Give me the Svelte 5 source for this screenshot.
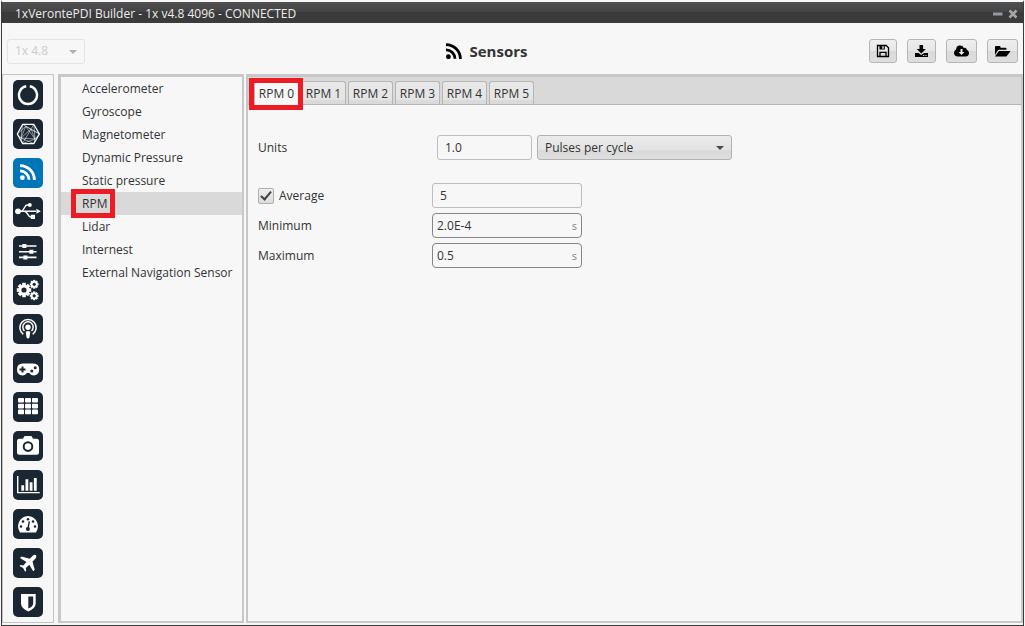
<script lang="ts">
  let version = $state('1x 4.8');
  let sensor = $state('RPM');
  let tab = $state(0);
  let units = $state('1.0');
  let unitType = $state('Pulses per cycle');
  let average = $state(true);
  let samples = $state('5');
  let minimum = $state('2.0E-4');
  let maximum = $state('0.5');
  let section = $state('sensors');

  const sensors = [
    'Accelerometer',
    'Gyroscope',
    'Magnetometer',
    'Dynamic Pressure',
    'Static pressure',
    'RPM',
    'Lidar',
    'Internest',
    'External Navigation Sensor'
  ];
  const tabs = [0, 1, 2, 3, 4, 5];
  const sections = [
    'veronte', 'connections', 'sensors', 'usb', 'control', 'automations', 'communications',
    'stick', 'variables', 'camera', 'telemetry', 'panel', 'aircraft', 'safety'
  ];
  const cogTeeth = [0, 45, 90, 135];
</script>

{#snippet cog(x: number, y: number, r: number)}
  <g transform="translate({x} {y})">
    {#each cogTeeth as angle}
      <rect x={-r * 0.25} y={-r} width={r * 0.5} height={r * 2} transform="rotate({angle})" />
    {/each}
    <circle r={r * 0.77} />
    <circle r={r * 0.36} class="hole" />
  </g>
{/snippet}

{#snippet rss()}
  <circle cx="9.4" cy="19.7" r="2.4" />
  <path d="M7 12.8a9 9 0 0 1 9 9M7 7.6a14.4 14.4 0 0 1 14.4 14.4" class="line" stroke-width="2.8" />
{/snippet}

{#snippet sectionIcon(name: string)}
  <svg viewBox="0 0 30 30" aria-hidden="true">
    {#if name === 'veronte'}
      <path d="M16.8 6.2a9 9 0 1 1-3.6 0" class="line" stroke-width="2.4" />
    {:else if name === 'connections'}
      <path d="M4.3 15 9.6 5.4h11.2L26.4 15l-5.6 9.6H9.6z" class="line" stroke-width="1.2" />
      <path d="M9.6 5.4 18 10l2.8-4.6M4.3 15l8.4-7.6L26.4 15M9.6 5.4 8 19l1.6 5.6M4.3 15 8 19l10-9 4 10-1.2 4.6M26.4 15 22 20 8 19l12.8 5.6M9.6 24.6l8.4-14.6L26.4 15M12.7 7.4 22 20l-12.4 4.6M20.8 5.4 22 20M12.7 7.4 8 19" class="line" stroke-width="0.5" />
    {:else if name === 'sensors'}
      {@render rss()}
    {:else if name === 'usb'}
      <circle cx="5" cy="14.3" r="2.9" />
      <circle cx="16.8" cy="8.1" r="2" />
      <path d="M5 14.3h18M8 14.3c3 0 3.5-6.2 6-6.2h3M11.5 14.3c3 0 3.5 5.7 6 5.7h2" class="line" stroke-width="1.5" />
      <path d="m23.4 11.8 4.4 2.5-4.4 2.5zM17.8 17.8H22V22h-4.2z" />
    {:else if name === 'control'}
      <path d="M6 10h17.5M6 15.7h17.5M6 21.4h17.5" class="line" stroke-width="1.6" />
      <path d="M9.4 8h4v4h-4zM16.4 13.7h4v4h-4zM10.4 19.4h4v4h-4z" />
    {:else if name === 'automations'}
      {@render cog(11, 15, 7.2)}
      {@render cog(21.2, 9.3, 4.4)}
      {@render cog(21.2, 20.8, 4.4)}
    {:else if name === 'communications'}
      <path d="M10.3 20.3a8.2 8.2 0 1 1 9.4 0M11.5 16.9a5.2 5.2 0 1 1 7 0" class="line" stroke-width="1.5" />
      <circle cx="15" cy="13.2" r="2.7" />
      <path d="M12.7 17.8q2.3-1.4 4.6 0l-.9 6q-1.4 1.3-2.8 0z" />
    {:else if name === 'stick'}
      <path d="M9.8 10.6q-5.8.2-5.8 6T9.8 22.4q2.7 0 4-2.4h2.6q1.3 2.4 4 2.4 5.8 0 5.8-5.8t-5.8-6z" />
      <path d="M6.5 16.5h6M9.5 13.5v6" class="dark" stroke-width="2" />
      <circle cx="18.8" cy="18" r="1.5" class="hole" />
      <circle cx="22.2" cy="14.7" r="1.5" class="hole" />
    {:else if name === 'variables'}
      {#each [6, 11.8, 17.6] as y}
        {#each [5, 12, 19] as x}
          <rect {x} {y} width="6" height="4.6" rx="0.8" />
        {/each}
      {/each}
    {:else if name === 'camera'}
      <path d="M6.5 7.8H10l1-2q.3-.8 1.2-.8h5.6q.9 0 1.2.8l1 2h3.5Q26 7.8 26 10.3v11q0 2.5-2.5 2.5h-17Q4 23.8 4 21.3v-11q0-2.5 2.5-2.5z" />
      <circle cx="15" cy="15.6" r="4.3" class="dark" stroke-width="2" />
    {:else if name === 'telemetry'}
      <path d="M4.7 6v16.6h22" class="line" stroke-width="1.4" />
      <path d="M8.3 15.2h2.8v5.6H8.3zM12.5 9.3h2.8v11.5h-2.8zM16.7 12.2h2.8v8.6h-2.8zM20.9 8h2.8v12.8h-2.8z" />
    {:else if name === 'panel'}
      <path d="M7 23.5q-2-2.9-2-6.4a10 10 0 0 1 20 0q0 3.5-2 6.4z" />
      <path d="m16.3 12.5-1.3 7" class="dark" stroke-width="1.4" />
      <circle cx="14.9" cy="20" r="2" class="hole" />
      {#each [[8, 17.5], [10, 12.5], [15, 10.3], [20, 12.5], [22, 17.5]] as [cx, cy]}
        <circle {cx} {cy} r="1.3" class="hole" />
      {/each}
    {:else if name === 'aircraft'}
      <path d="M23 7.2q-1.5-1-3.2.5l-3.1 3L8.5 8.5 7 10l6.5 3.9-3.2 3.5-2.8-.4-1 1 3.6 2.1 2.1 3.6 1-1-.4-2.8 3.5-3.2 3.9 6.5 1.5-1.5-2.2-8.2 3-3.1q1.5-1.7.5-3.2z" />
    {:else}
      <path d="M8 7h14.7v9.4q0 4.5-7.4 8Q8 20.9 8 16.4z" />
      <path d="M15.3 9.5h4.9v6.9q0 2.7-4.9 5.2z" class="hole" />
    {/if}
  </svg>
{/snippet}

<div class="window">
  <div class="titlebar">
    <span>1xVerontePDI Builder - 1x v4.8 4096 - CONNECTED</span>
    <div class="window-buttons">
      <button aria-label="Minimize">
        <svg width="10" height="10" viewBox="0 0 10 10"><path d="M0 5h9.5" stroke="#909aa0" stroke-width="3" /></svg>
      </button>
      <button aria-label="Close">
        <svg width="10" height="10" viewBox="0 0 10 10"><path d="m1.5 1.5 7 7m0-7-7 7" stroke="#a8a8a8" stroke-width="2.5" /></svg>
      </button>
    </div>
  </div>

  <header>
    <div class="select version">
      <select bind:value={version} aria-label="Version" disabled>
        <option>1x 4.8</option>
      </select>
      <svg width="8" height="4" viewBox="0 0 8 4"><path d="M0 0h8L4 4z" /></svg>
    </div>
    <h1>
      <svg width="16" height="16" viewBox="7 6 16 16" aria-hidden="true">{@render rss()}</svg>
      Sensors
    </h1>
    <div class="toolbar">
      <button aria-label="Save">
        <svg width="14" height="14" viewBox="0 0 14 14">
          <path d="M1.5 1.5h8.7l2.3 2.3v8.7h-11zM4 12.5V8.3h6v4.2" fill="none" stroke="#000" stroke-width="1.3" />
          <path d="M3.5 1.5h5.3v4H3.5z" /><path d="M6.3 2.3h1.4v2.4H6.3z" fill="#eee" />
        </svg>
      </button>
      <button aria-label="Download">
        <svg width="15" height="14" viewBox="0 0 15 14">
          <path d="M5.5 1h3.6v3.9h2.8L7.3 9.4 2.7 4.9h2.8z" />
          <path d="M1 9h3.5l2.8 2.1L10.1 9H14v4H1z" /><path d="M9 11.5h1.2m1.2 0h1.2" stroke="#ddd" />
        </svg>
      </button>
      <button aria-label="Download from cloud">
        <svg width="17" height="14" viewBox="0 0 17 14">
          <path d="M5 12.5q-4 0-4-3.7 0-2.3 2.1-3.3Q3.2 1.5 7 1.5q2.8 0 3.9 2.4 2.5-.7 2.9 1.9 2.2.9 2.2 3.3 0 3.4-3.5 3.4z" />
          <path d="M7.5 5h2v3h2l-3 3-3-3h2z" fill="#e8e8e8" />
        </svg>
      </button>
      <button aria-label="Open">
        <svg width="17" height="14" viewBox="0 0 17 14">
          <path d="M1 11V3q0-1 1-1h3.5q1 0 1 1v.8h5q1 0 1 1v1H5.2q-.9 0-1.5.8z" />
          <path d="M4.9 7h11q.7 0 .2.700l-3.3 4.300q-.4.500-1 .500H1z" />
        </svg>
      </button>
    </div>
  </header>

  <main>
    <nav class="sections">
      {#each sections as name}
        <button class:active={section === name} aria-label={name} onclick={() => (section = name)}>
          {@render sectionIcon(name)}
        </button>
      {/each}
    </nav>

    <ul class="sensor-list">
      {#each sensors as name}
        <li>
          <button class:active={sensor === name} onclick={() => (sensor = name)}>
            <span>{name}</span>
          </button>
        </li>
      {/each}
    </ul>

    <section class="content">
      <div class="tabs" role="tablist">
        {#each tabs as n}
          <button role="tab" aria-selected={tab === n} class:active={tab === n} onclick={() => (tab = n)}>
            RPM {n}
          </button>
        {/each}
      </div>

      <div class="form">
        <div class="row units">
          <label for="units">Units</label>
          <div class="pair">
            <div class="field"><input id="units" bind:value={units} /></div>
            <div class="select">
              <select bind:value={unitType} aria-label="Unit type">
                <option>Pulses per cycle</option>
                <option>Cycles per pulse</option>
              </select>
              <svg width="8" height="4" viewBox="0 0 8 4"><path d="M0 0h8L4 4z" /></svg>
            </div>
          </div>
        </div>
        <div class="row">
          <label class="check">
            <input type="checkbox" bind:checked={average} />
            Average
          </label>
          <div class="field"><input bind:value={samples} aria-label="Average samples" /></div>
        </div>
        <div class="row">
          <label for="minimum">Minimum</label>
          <div class="field measure"><input id="minimum" bind:value={minimum} /><span>s</span></div>
        </div>
        <div class="row">
          <label for="maximum">Maximum</label>
          <div class="field measure"><input id="maximum" bind:value={maximum} /><span>s</span></div>
        </div>
      </div>
    </section>
  </main>
</div>

<style>
  :global(body) {
    background: #f7f7f7;
  }
  .window {
    box-sizing: border-box;
    min-height: 100vh;
    display: flex;
    flex-direction: column;
    margin: 0 1px;
    border: 1px solid #3a3a3a;
    border-top: 2px solid #f7f7f7;
    background: #f7f7f7;
    color: #333;
    font: 12px/16px "Open Sans", "Noto Sans", sans-serif;
  }
  button,
  input,
  select {
    box-sizing: border-box;
    margin: 0;
    padding: 0;
    border: 0;
    background: none;
    color: inherit;
    font: inherit;
  }
  svg {
    display: block;
  }
  .titlebar {
    display: flex;
    align-items: center;
    justify-content: space-between;
    box-sizing: border-box;
    height: 21px;
    padding: 2px 5px 0 13px;
    background: linear-gradient(#505050 0, #444 45%, #3a3a3a 50%, #3c3c3c 100%);
    color: #eee;
  }
  .window-buttons {
    display: flex;
    gap: 5px;
  }
  header {
    display: grid;
    grid-template-columns: 1fr auto 1fr;
    align-items: center;
    height: 51px;
    padding: 5px 5px 0;
    box-sizing: border-box;
  }
  h1 {
    display: flex;
    align-items: center;
    gap: 8px;
    margin: 0;
    padding-right: 52px;
    font-size: 15px;
    line-height: 20px;
  }
  h1 svg {
    color: #000;
  }
  .toolbar {
    display: flex;
    justify-content: flex-end;
    gap: 10px;
  }
  .toolbar button {
    height: 24px;
    padding: 0 6px;
    border: 1px solid #b5b5b5;
    border-radius: 3px;
    background: linear-gradient(#eee, #e6e6e6 50%, #dadada 52%, #dedede);
  }
  .select {
    position: relative;
  }
  .select select {
    appearance: none;
    width: 195px;
    height: 25px;
    padding: 0 24px 0 7px;
    border: 1px solid #b2b2b2;
    border-radius: 3px;
    background: linear-gradient(#ebebeb, #e3e3e3 60%, #d9d9d9 65%, #dedede);
  }
  .select svg {
    position: absolute;
    top: 11px;
    right: 8px;
    fill: #4a4a4a;
    pointer-events: none;
  }
  .version {
    justify-self: start;
  }
  .version select {
    width: 78px;
    border-color: #e3e3e3;
    background: #f7f7f7;
    color: #ccc;
    opacity: 1;
  }
  .version svg {
    fill: #b0b0b0;
  }
  main {
    flex: 1;
    display: flex;
    padding-bottom: 2px;
  }
  .sections {
    display: flex;
    flex-direction: column;
    gap: 9px;
    width: 52px;
    box-sizing: border-box;
    padding: 5px 0 2px 10px;
    border: 1px solid #c4c4c4;
  }
  .sections button {
    width: 30px;
    height: 30px;
    border-radius: 5px;
    background: #1a2733;
    color: #fff;
    --icon-bg: #1a2733;
  }
  .sections .active {
    background: #0076b8;
  }
  svg :global(.line) {
    fill: none;
    stroke: currentColor;
  }
  svg :global(.dark) {
    fill: none;
    stroke: var(--icon-bg);
  }
  svg :global(.hole) {
    fill: var(--icon-bg);
  }
  .sections svg,
  h1 svg {
    fill: currentColor;
  }
  .sensor-list {
    width: 186px;
    box-sizing: border-box;
    margin: 0 0 0 4px;
    padding: 0;
    border: 3px solid #c8c8c8;
    border-width: 3px 2px 2px 3px;
    list-style: none;
  }
  .sensor-list button {
    display: block;
    width: 100%;
    height: 23px;
    padding-left: 21px;
    text-align: left;
  }
  .sensor-list .active {
    background: #d9d9d9;
  }
  .sensor-list span {
    position: relative;
  }
  .sensor-list .active span::after {
    content: "";
    position: absolute;
    inset: -6px -8px -6px -11px;
    border: 5px solid #ed1c24;
  }
  .content {
    flex: 1;
    min-width: 0;
    margin-left: 2px;
    border: 2px solid #c8c8c8;
    border-top-width: 3px;
  }
  .tabs {
    display: flex;
    align-items: flex-end;
    gap: 2px;
    height: 28px;
    box-sizing: border-box;
    padding-left: 6px;
    border-bottom: 1px solid #b5b5b5;
    background: #d9d9d9;
  }
  .tabs button {
    position: relative;
    width: 45px;
    height: 23px;
    padding-top: 2px;
    border: 1px solid #b5b5b5;
    border-bottom: 0;
    border-radius: 3px 3px 0 0;
    background: linear-gradient(#e8e8e8, #e4e4e4 80%, #dadada 85%);
    white-space: nowrap;
  }
  .tabs .active {
    z-index: 1;
    margin-bottom: -1px;
    height: 24px;
    padding-top: 1px;
    background: #f7f7f7;
  }
  .tabs .active::after {
    content: "";
    position: absolute;
    inset: -4px -5px -5px -6px;
    border: 5px solid #ed1c24;
  }
  .form {
    display: flex;
    flex-direction: column;
    gap: 5px;
    padding: 30px 10px;
  }
  .row {
    display: grid;
    grid-template-columns: 174px auto;
    justify-content: start;
    align-items: center;
  }
  .units {
    margin-bottom: 18px;
  }
  .pair {
    display: flex;
    gap: 5px;
    padding-left: 5px;
  }
  .pair .field {
    width: 95px;
  }
  .field {
    display: flex;
    align-items: center;
    box-sizing: border-box;
    width: 150px;
    height: 25px;
    padding: 0 7px;
    border: 1px solid #bdbdbd;
    border-radius: 3px;
  }
  .field input {
    flex: 1;
    min-width: 0;
    outline: 0;
  }
  .measure {
    padding: 0 4px;
    border-color: #858585;
    border-radius: 4px;
  }
  .measure span {
    color: #858585;
    font-size: 11px;
  }
  .check {
    display: flex;
    align-items: center;
    gap: 5px;
  }
  .check input {
    display: grid;
    place-items: center;
    appearance: none;
    width: 16px;
    height: 16px;
    border: 1px solid #b0b0b0;
    border-radius: 2px;
    background: linear-gradient(#eee, #dcdcdc);
  }
  .check input:checked::after {
    content: "";
    box-sizing: border-box;
    width: 6px;
    height: 11px;
    margin-bottom: 2px;
    border: solid #444;
    border-width: 0 2px 2px 0;
    transform: rotate(40deg);
  }
</style>
